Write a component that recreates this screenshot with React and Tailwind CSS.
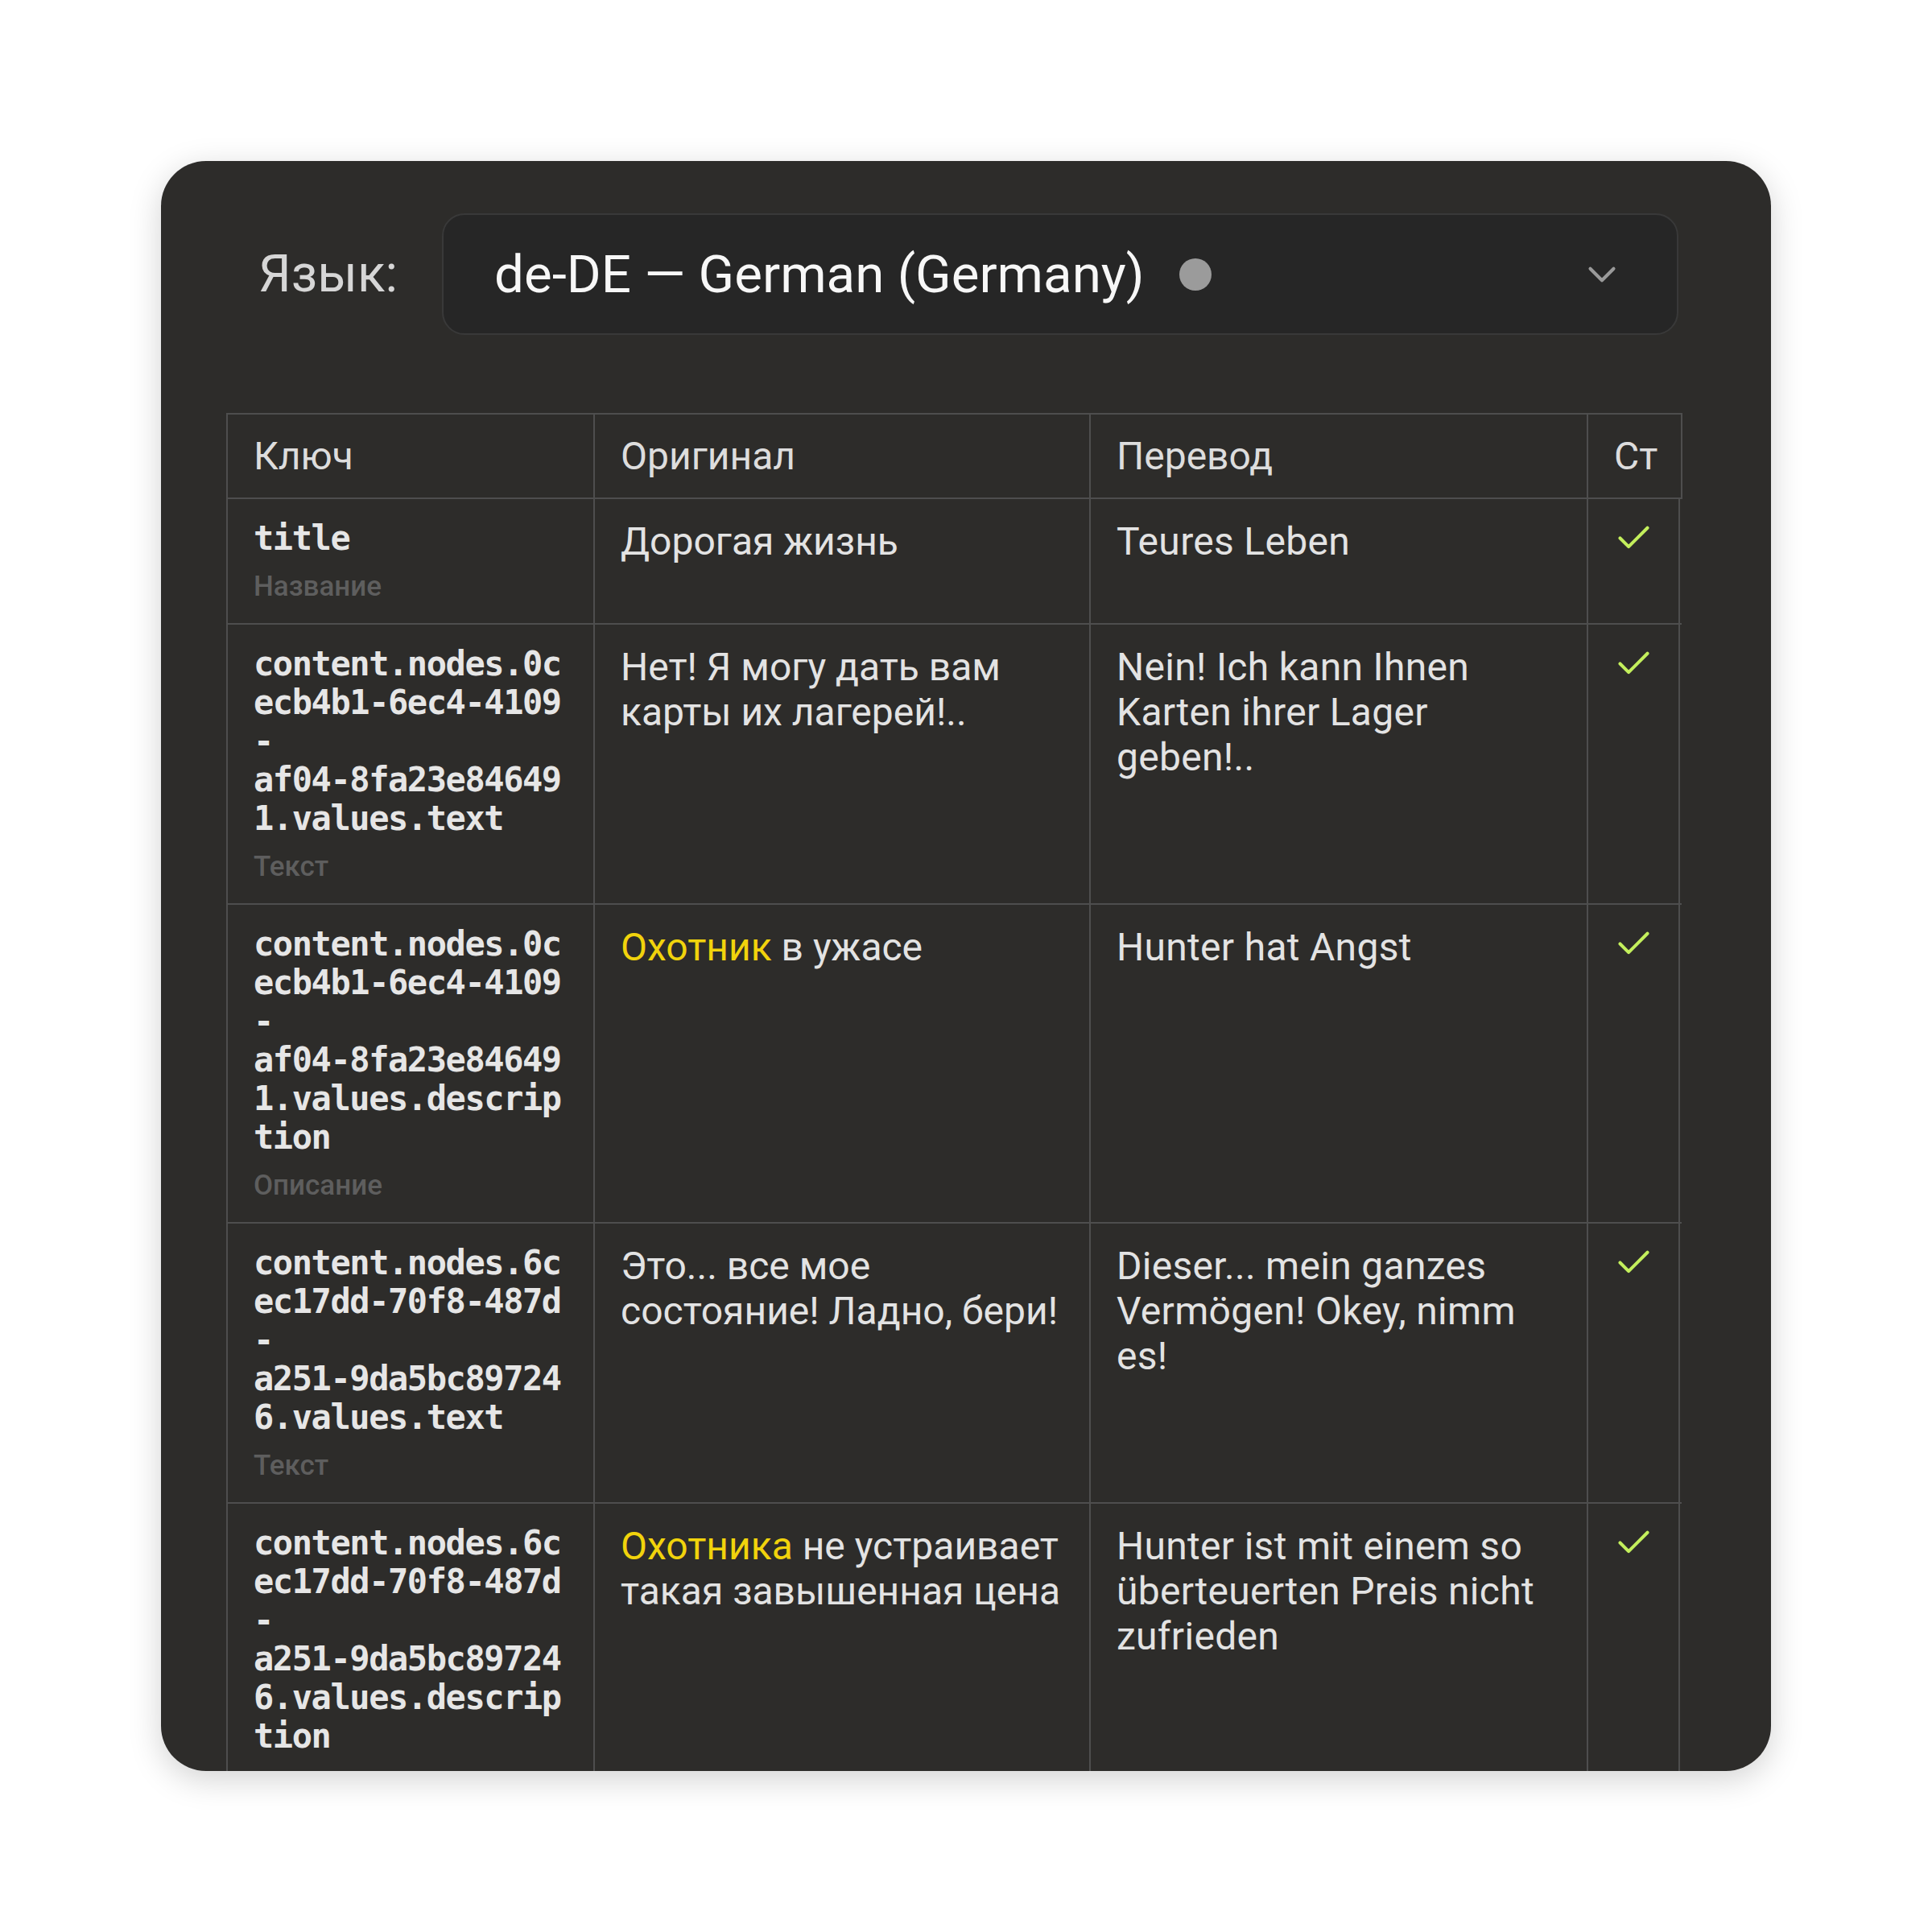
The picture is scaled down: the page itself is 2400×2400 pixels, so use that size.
import React from "react";
import { Check, ChevronDown } from "lucide-react";

const sans = "font-['Roboto','Noto_Sans',sans-serif]";
const mono = "font-['DejaVu_Sans_Mono','Liberation_Mono',monospace]";

const Hl = ({ children }) => <span className="text-[#f1d30c]">{children}</span>;

const rows = [
  {
    key: ["title"],
    label: "Название",
    orig: ["Дорогая жизнь"],
    trans: ["Teures Leben"],
  },
  {
    key: ["content.nodes.0c", "ecb4b1-6ec4-4109", "-", "af04-8fa23e84649", "1.values.text"],
    label: "Текст",
    orig: ["Нет! Я могу дать вам", "карты их лагерей!.."],
    trans: ["Nein! Ich kann Ihnen", "Karten ihrer Lager", "geben!.."],
  },
  {
    key: ["content.nodes.0c", "ecb4b1-6ec4-4109", "-", "af04-8fa23e84649", "1.values.descrip", "tion"],
    label: "Описание",
    orig: [
      <>
        <Hl>Охотник</Hl> в ужасе
      </>,
    ],
    trans: ["Hunter hat Angst"],
  },
  {
    key: ["content.nodes.6c", "ec17dd-70f8-487d", "-", "a251-9da5bc89724", "6.values.text"],
    label: "Текст",
    orig: ["Это... все мое", "состояние! Ладно, бери!"],
    trans: ["Dieser... mein ganzes", "Vermögen! Okey, nimm", "es!"],
  },
  {
    key: ["content.nodes.6c", "ec17dd-70f8-487d", "-", "a251-9da5bc89724", "6.values.descrip", "tion"],
    label: "Описание",
    orig: [
      <>
        <Hl>Охотника</Hl> не устраивает
      </>,
      "такая завышенная цена",
    ],
    trans: ["Hunter ist mit einem so", "überteuerten Preis nicht", "zufrieden"],
  },
];

function Lines({ lines, className }) {
  return (
    <div className={className}>
      {lines.map((l, i) => (
        <div key={i} className="whitespace-nowrap">
          {l}
        </div>
      ))}
    </div>
  );
}

export default function App() {
  return (
    <div className={`w-[2400px] h-[2400px] bg-white flex items-center justify-center ${sans}`}>
      <div className="w-[2000px] h-[2000px] rounded-[56px] bg-[#2d2c2a] overflow-hidden shadow-[0_10px_40px_rgba(0,0,0,0.18)] pl-[81px] pt-[65px]">
        {/* language picker */}
        <div className="flex items-center w-[1804px] h-[151px]">
          <div className="w-[268px] pl-[40px] text-[64px] leading-none text-[#d6d6d6]">Язык:</div>
          <div className="flex-1 h-full flex items-center rounded-[28px] border-2 border-[#393939] bg-[#262626] pl-[63px] pr-[64px]">
            <span className="text-[65.5px] leading-none text-[#f7f7f7] whitespace-nowrap">
              de-DE — German (Germany)
            </span>
            <span className="ml-[43px] w-[40px] h-[40px] rounded-full bg-[#9b9b9b]" />
            <ChevronDown
              className="ml-auto text-[#9a9a9a]"
              size={58}
              strokeWidth={1.7}
            />
          </div>
        </div>

        {/* translation table */}
        <div className="mt-[97px] w-[1809px] border-l-2 border-t-2 border-[#4e4e4e]">
          <div className="flex text-[48px] leading-[55px] text-[#dddddd] border-b-2 border-[#4e4e4e]">
            <div className="w-[456px] shrink-0 px-[32px] py-[24px] border-r-2 border-[#4e4e4e]">Ключ</div>
            <div className="w-[616px] shrink-0 px-[32px] py-[24px] border-r-2 border-[#4e4e4e]">Оригинал</div>
            <div className="w-[618px] shrink-0 px-[32px] py-[24px] border-r-2 border-[#4e4e4e]">Перевод</div>
            <div className="w-[117px] shrink-0 px-[32px] py-[24px] border-r-2 border-[#4e4e4e] overflow-hidden whitespace-nowrap">Ст</div>
          </div>

          {rows.map((r, i) => (
            <div key={i} className="flex w-[1806px] border-b-2 border-[#4e4e4e]">
              <div className="w-[456px] shrink-0 px-[32px] pt-[25px] pb-[25px] border-r-2 border-[#4e4e4e]">
                <Lines
                  lines={r.key}
                  className={`${mono} font-bold text-[42px] leading-[48px] tracking-[-1.43px] text-[#e6e6e6]`}
                />
                <div className="mt-[16px] text-[35px] leading-[40px] font-medium text-[#5e5e5e]">{r.label}</div>
              </div>
              <div className="w-[616px] shrink-0 px-[32px] pt-[25px] pb-[25px] border-r-2 border-[#4e4e4e]">
                <Lines lines={r.orig} className="text-[48px] leading-[56px] text-[#e3e3e3]" />
              </div>
              <div className="w-[618px] shrink-0 px-[32px] pt-[25px] pb-[25px] border-r-2 border-[#4e4e4e]">
                <Lines lines={r.trans} className="text-[48px] leading-[56px] tracking-[0.3px] text-[#e3e3e3]" />
              </div>
              <div className="w-[114px] shrink-0 pt-[23px] flex justify-center items-start border-r-2 border-[#4e4e4e]">
                <Check size={51} strokeWidth={1.9} className="text-[#c3ef5c]" />
              </div>
            </div>
          ))}
        </div>
      </div>
    </div>
  );
}
